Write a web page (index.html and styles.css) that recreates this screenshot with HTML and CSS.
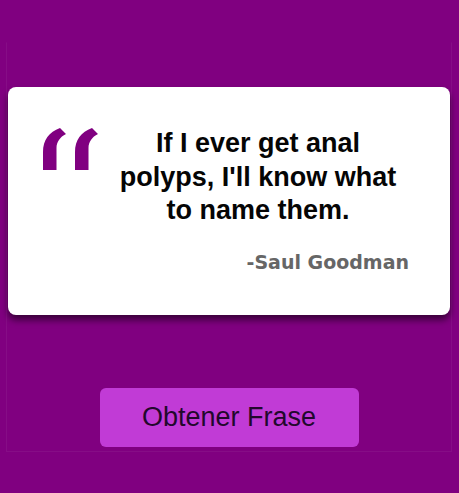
FILE: index.html
```html
<!DOCTYPE html>
<html lang="es">
<head>
<meta charset="utf-8">
<title>Frases</title>
<link rel="stylesheet" href="styles.css">
</head>
<body>
<main class="wrapper">
  <section class="card">
    <svg class="quote-mark" width="55" height="42" viewBox="0 0 55 42" aria-hidden="true">
      <path d="M0 42 L0 24 C0 12 6 4 17 0 L23 6 C17 9 13.5 14 13.5 20 L13.5 42 Z" fill="#800080"/>
      <path d="M32 42 L32 24 C32 12 38 4 49 0 L55 6 C49 9 45.5 14 45.5 20 L45.5 42 Z" fill="#800080"/>
    </svg>
    <div class="quote-body">
      <p class="quote-text">If I ever get anal polyps, I'll know what to name them.</p>
      <p class="quote-author">-Saul Goodman</p>
    </div>
  </section>
  <div class="actions">
    <button class="btn" type="button">Obtener Frase</button>
  </div>
</main>
</body>
</html>
```
FILE: styles.css
```css
html, body {
  margin: 0;
  padding: 0;
  background: #800080;
  height: 100%;
}
body {
  font-family: "Liberation Sans", Arial, sans-serif;
}
.wrapper {
  box-sizing: border-box;
  margin: 42px 7px 0 6px;
  height: 410px;
  border: 1px solid rgba(255, 255, 255, 0.05);
  border-top-color: transparent;
  padding: 44px 1px 0 1px;
  display: flex;
  flex-direction: column;
}
.card {
  box-sizing: border-box;
  height: 228px;
  background: #ffffff;
  border-radius: 8px;
  box-shadow: 0 5px 7px rgba(0, 0, 0, 0.55);
  padding: 40px 41px 0 35px;
  display: flex;
  align-items: flex-start;
  gap: 9px;
}
.quote-mark {
  flex: none;
  margin-top: 1px;
}
.quote-body {
  flex: 1;
  display: flex;
  flex-direction: column;
}
.quote-text {
  margin: 0;
  font-weight: bold;
  font-size: 27px;
  line-height: 33.5px;
  color: #050505;
  text-align: center;
}
.quote-author {
  margin: 23px 0 0 0;
  font-family: "DejaVu Sans", Verdana, sans-serif;
  font-weight: bold;
  font-size: 19px;
  color: #666666;
  text-align: right;
}
.actions {
  display: flex;
  justify-content: center;
  margin-top: 73px;
}
.btn {
  width: 259px;
  height: 59px;
  border: none;
  border-radius: 6px;
  background: #c13bd6;
  color: #22082c;
  font-family: "Liberation Sans", Arial, sans-serif;
  font-size: 27px;
  padding: 0;
  cursor: pointer;
}
```
